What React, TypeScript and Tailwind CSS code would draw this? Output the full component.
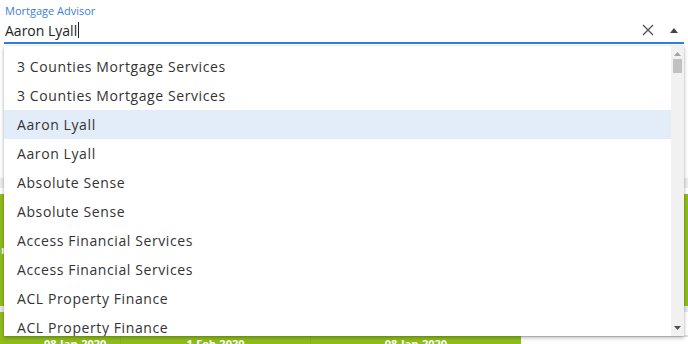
import React from "react";

const items = [
  "3 Counties Mortgage Services",
  "3 Counties Mortgage Services",
  "Aaron Lyall",
  "Aaron Lyall",
  "Absolute Sense",
  "Absolute Sense",
  "Access Financial Services",
  "Access Financial Services",
  "ACL Property Finance",
  "ACL Property Finance",
];

export default function App() {
  return (
    <div
      className="relative w-[688px] h-[344px] overflow-hidden bg-white"
      style={{ fontFamily: "'Open Sans', Lato, sans-serif" }}
    >
      {/* form field */}
      <div className="px-[4px] pt-[4px]">
        <div className="text-[11px] leading-[14px] text-[#3b7fd6] pl-[1px]">Mortgage Advisor</div>
        <div className="flex items-center h-[26px] border-b-2 border-[#2f7fd8]">
          <div className="flex-1 text-[14px] text-[#222] flex items-center pl-[1px]">
            Aaron Lyall<span className="inline-block w-px h-[16px] bg-[#222] ml-[1px]" />
          </div>
          <svg width="12" height="12" viewBox="0 0 12 12" className="mr-[16px]">
            <path d="M1 1L11 11M11 1L1 11" stroke="#555" strokeWidth="1.4" />
          </svg>
          <svg width="8" height="5" viewBox="0 0 8 5" className="mr-[6px]">
            <path d="M0 5L4 0L8 5Z" fill="#444" />
          </svg>
        </div>
      </div>

      {/* background content */}
      <div className="mt-[134px]">
        <div className="h-[10px] bg-[#ececec]" />
        <div className="h-[6px] bg-white" />
        <div className="h-[112px] bg-[#8fbd1c] flex items-center text-white text-[11px] font-bold">
          <span className="ml-[1px]">r</span>
        </div>
        <div className="h-[6px] bg-[#e8e8e8]" />
        <div className="flex h-[40px]">
          <div className="w-[521px] bg-[#8fbd1c] flex text-white text-[11px] font-bold pt-[24px]">
            <span className="w-[120px] pl-[44px]">08-Jan-2020</span>
            <span className="w-[190px] text-center border-l border-[#86b31a]">1-Feb-2020</span>
            <span className="flex-1 text-center border-l border-[#86b31a]">08-Jan-2020</span>
          </div>
          <div className="flex-1 border-t-2 border-[#e0e0e0] mt-[23px]" />
        </div>
      </div>

      {/* dropdown */}
      <div className="absolute left-[4px] top-[46px] w-[680px] h-[290px] bg-white shadow-[0_2px_4px_rgba(0,0,0,0.25),0_0_2px_rgba(0,0,0,0.15)] flex">
        <div className="flex-1 pt-[6px] overflow-hidden">
          {items.map((t, i) => (
            <div
              key={i}
              className={`h-[29px] flex items-center pl-[13px] text-[14px] tracking-[0.6px] text-[#333] ${i === 2 ? "bg-[#e3edf9]" : ""}`}
            >
              {t}
            </div>
          ))}
        </div>
        <div className="w-[13px] bg-[#f1f1f1] flex flex-col items-center">
          <svg width="7" height="4" viewBox="0 0 7 4" className="mt-[6px]">
            <path d="M0 4L3.5 0L7 4Z" fill="#a3a3a3" />
          </svg>
          <div className="w-[9px] h-[14px] bg-[#c1c1c1] mt-[3px]" />
          <div className="flex-1" />
          <svg width="7" height="4" viewBox="0 0 7 4" className="mb-[6px]">
            <path d="M0 0L7 0L3.5 4Z" fill="#505050" />
          </svg>
        </div>
      </div>
    </div>
  );
}
